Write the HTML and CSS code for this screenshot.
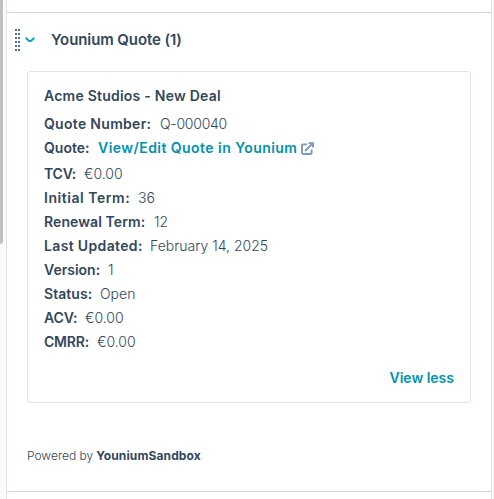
FILE: index.html
```html
<!DOCTYPE html>
<html lang="en">
<head>
<meta charset="utf-8">
<title>Younium Quote</title>
<link rel="stylesheet" href="styles.css">
</head>
<body>
<div class="page">
  <div class="gutter"><div class="thumb"></div></div>
  <main class="panel">
    <section class="section">
      <header class="section-head">
        <svg class="grip" width="5" height="23" viewBox="0 0 5 23" fill="#516f90" shape-rendering="crispEdges"><path d="M0 0h2v2H0zM3 0h2v2H3zM0 4h2v2H0zM3 4h2v2H3zM0 8h2v2H0zM3 8h2v2H3zM0 12h2v2H0zM3 12h2v2H3zM0 16h2v2H0zM3 16h2v2H3zM0 20h2v2H0zM3 20h2v2H3z"/></svg>
        <svg class="chevron" width="10" height="6" viewBox="0 0 10 6" fill="none" stroke="#00a4bd" stroke-width="1.9" stroke-linecap="round" stroke-linejoin="round"><path d="M1.2 1.3L3.6 3.5Q5 4.7 6.4 3.5L8.8 1.3"/></svg>
        <h2>Younium Quote (1)</h2>
      </header>
      <article class="card">
        <h3>Acme Studios - New Deal</h3>
        <dl>
          <div class="row number"><dt>Quote Number:</dt><dd>Q-000040</dd></div>
          <div class="row quote"><dt>Quote:</dt><dd><a>View/Edit Quote in Younium</a><svg class="external" width="13" height="13" viewBox="0 0 13 13" fill="none" stroke="#7c98b6" stroke-width="1.9"><path d="M6 2.4H2.2Q1 2.4 1 3.6V10.8Q1 12 2.2 12H9.4Q10.6 12 10.6 10.8V7.5M4 9L11 2M7.5 1.1H12V5.5"/></svg></dd></div>
          <div class="row tcv"><dt>TCV:</dt><dd>€0.00</dd></div>
          <div class="row initial"><dt>Initial Term:</dt><dd>36</dd></div>
          <div class="row renewal"><dt>Renewal Term:</dt><dd>12</dd></div>
          <div class="row updated"><dt>Last Updated:</dt><dd>February 14, 2025</dd></div>
          <div class="row version"><dt>Version:</dt><dd>1</dd></div>
          <div class="row status"><dt>Status:</dt><dd>Open</dd></div>
          <div class="row acv"><dt>ACV:</dt><dd>€0.00</dd></div>
          <div class="row cmrr"><dt>CMRR:</dt><dd>€0.00</dd></div>
        </dl>
        <a class="less">View less</a>
      </article>
      <footer><span>Powered by</span><b>YouniumSandbox</b></footer>
    </section>
  </main>
</div>
</body>
</html>
```
FILE: styles.css
```css
* { box-sizing: border-box; margin: 0; padding: 0; }
body { background: #fafafa; color: #33475b; font: 14px/24px Inter, "Liberation Sans", sans-serif; overflow: hidden; }
.page { display: flex; height: 499px; }
.gutter { width: 6px; flex: none; }
.thumb { width: 3px; height: 244px; background: #c1c1c1; border-bottom-right-radius: 3px; }
.panel { width: 486px; background: #fff; border: solid #dfe3eb; border-width: 0 1px; padding-top: 12px; }
.section { height: 480px; border: solid #cbd6e2; border-width: 1px 0; }
.section-head { display: flex; align-items: center; height: 54px; padding-left: 8px; }
.grip { margin-top: 1px; }
.chevron { margin-left: 5px; }
h2, h3 { font-size: 14px; font-weight: 600; white-space: nowrap; }
h2 { margin-left: 16px; font-size: 15px; letter-spacing: -0.1px; }
.card { width: 444px; height: 332px; margin: 4px 0 0 20px; padding: 12px 16px; border: 1px solid #dfe3eb; border-radius: 3px; display: flex; flex-direction: column; }
h3 { margin-bottom: 4px; letter-spacing: 0.23px; }
.row { display: flex; height: 24px; white-space: nowrap; }
.row.quote { margin-bottom: 2px; }
dt { font-weight: 600; flex: none; }
.number dt { width: 116px; letter-spacing: 0.3px; }
.quote dt { width: 54px; }
.tcv dt { width: 40px; letter-spacing: -0.2px; }
.initial dt { width: 94px; letter-spacing: 0.55px; }
.renewal dt { width: 110px; letter-spacing: 0.1px; }
.updated dt { width: 106px; letter-spacing: 0.35px; }
.version dt { width: 64px; }
.status dt { width: 56px; letter-spacing: 0.05px; }
.acv dt { width: 41px; letter-spacing: -0.1px; }
.cmrr dt { width: 53px; letter-spacing: -0.2px; }
dd { display: flex; align-items: center; font-weight: 350; }
.number dd { letter-spacing: -0.25px; }
a { color: #0091ae; font-weight: 600; }
.quote a { letter-spacing: 0.45px; }
.external { margin-left: 4px; }
.less { align-self: flex-end; margin-top: 12px; }
footer { display: flex; gap: 3px; margin: 41px 0 0 20px; font-size: 12px; }
footer span { font-weight: 350; }
footer b { letter-spacing: 0.12px; }
```
